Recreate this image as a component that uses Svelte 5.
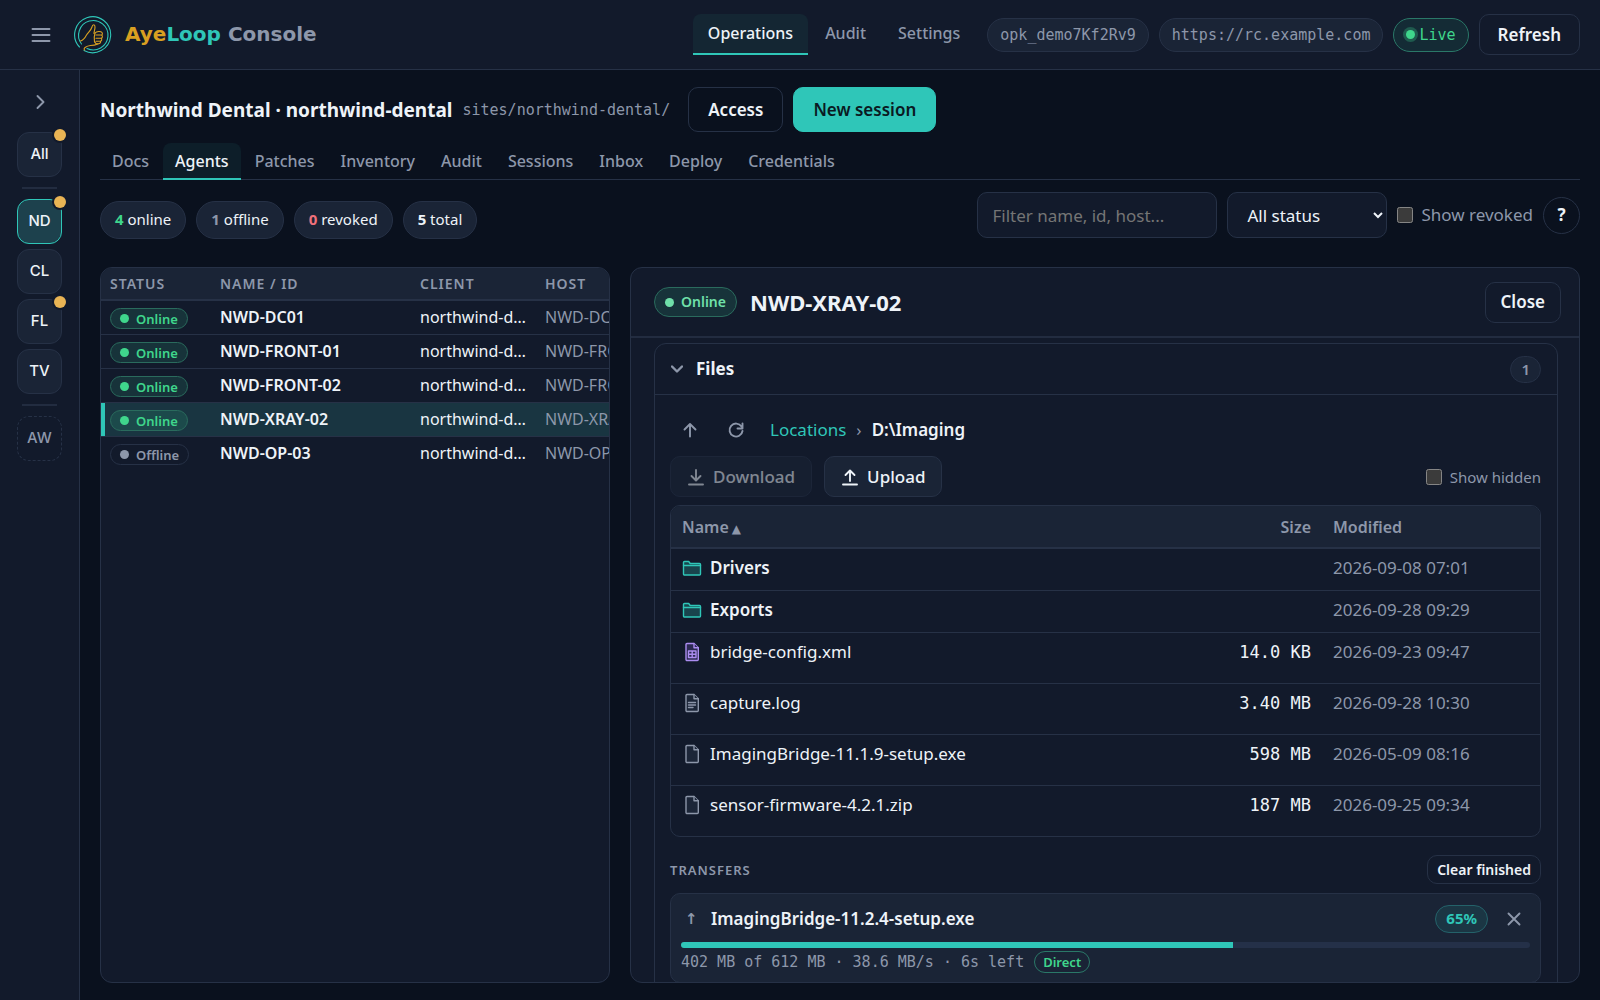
<script>
  const sites = [
    { code: 'ND', alert: true, active: true },
    { code: 'CL' },
    { code: 'FL', alert: true },
    { code: 'TV' }
  ]

  const navItems = ['Operations', 'Audit', 'Settings']
  const tabs = ['Docs', 'Agents', 'Patches', 'Inventory', 'Audit', 'Sessions', 'Inbox', 'Deploy', 'Credentials']

  const counts = [
    { n: 4, label: 'online' },
    { n: 1, label: 'offline' },
    { n: 0, label: 'revoked' },
    { n: 5, label: 'total' }
  ]

  const agents = [
    { name: 'NWD-DC01', online: true },
    { name: 'NWD-FRONT-01', online: true },
    { name: 'NWD-FRONT-02', online: true },
    { name: 'NWD-XRAY-02', online: true },
    { name: 'NWD-OP-03', online: false }
  ]

  const files = [
    { name: 'Drivers', kind: 'folder', size: '', modified: '2026-09-08 07:01' },
    { name: 'Exports', kind: 'folder', size: '', modified: '2026-09-28 09:29' },
    { name: 'bridge-config.xml', kind: 'sheet', size: '14.0 KB', modified: '2026-09-23 09:47' },
    { name: 'capture.log', kind: 'text', size: '3.40 MB', modified: '2026-09-28 10:30' },
    { name: 'ImagingBridge-11.1.9-setup.exe', kind: 'file', size: '598 MB', modified: '2026-05-09 08:16' },
    { name: 'sensor-firmware-4.2.1.zip', kind: 'file', size: '187 MB', modified: '2026-09-25 09:34' }
  ]

  const transfer = { name: 'ImagingBridge-11.2.4-setup.exe', percent: 65 }

  let page = $state('Operations')
  let tab = $state('Agents')
  let selected = $state('NWD-XRAY-02')
  let filter = $state('')
  let status = $state('all')
  let showRevoked = $state(false)
  let showHidden = $state(false)
</script>

{#snippet fileIcon(kind)}
  <svg class='file-icon {kind}' viewBox='0 0 20 20' width='20' height='20' aria-hidden='true'>
    {#if kind === 'folder'}
      <path d='M1.5 16V4.5a1 1 0 0 1 1-1h4.2l1.5 2h9.3a1 1 0 0 1 1 1V16a1 1 0 0 1-1 1h-15a1 1 0 0 1-1-1z' />
      <path d='M1.5 7.5h17' />
    {:else}
      <path d='M5 1.5h7l4.3 4.3v11.7a1 1 0 0 1-1 1H5a1 1 0 0 1-1-1v-15a1 1 0 0 1 1-1z' />
      <path d='M12 1.5v4.3h4.3' />
      {#if kind === 'sheet'}
        <path d='M6.5 9H14v6.5H6.5zM6.5 12.2H14M10.2 9v6.5' />
      {:else if kind === 'text'}
        <path d='M6.5 9.5h7M6.5 12h7M6.5 14.5H11' />
      {/if}
    {/if}
  </svg>
{/snippet}

<div class='app'>
  <header class='topbar'>
    <button class='icon-btn' aria-label='Menu'>
      <svg viewBox='0 0 20 20' width='20' height='20'><path d='M1.5 4h17M1.5 10h17M1.5 16h17' /></svg>
    </button>
    <svg class='logo' viewBox='0 0 38 38' width='38' height='38' aria-hidden='true'>
      <g class='ring'>
        <path d='M5.5 31A18 18 0 1 1 10 34.500' />
        <path d='M7.5 28A14.7 14.7 0 1 1 13 32.500' />
      </g>
      <g class='hand'>
        <path d='M6.5 25c3-1 4.5-3 6-6 1.500-2.500 4.500-4.500 5.500-8 .5-3 3-3 3 0 0 2.500-1 4.500-1 6.500' />
        <path d='M21 17c1.500-2 6-2 7-.5s0 2.500-.5 2.500c1.500 1 1 3-.3 3.200 1 1 .5 2.800-.7 3 .5 1.300-.5 2.500-2 2.500H22l-1.500-2' />
        <path d='M22 19h5M22 22.200h5M22 25.200h4.500M21 17c-1 3-1 6-.5 9' />
        <path d='M10.500 34c-1.500-2 2-4 6-4.500 3 0 5-.5 7.500-1.500' />
      </g>
    </svg>
    <h1 class='brand'><span class='aye'>Aye</span><span class='loop'>Loop</span> Console</h1>

    <nav class='main-nav'>
      {#each navItems as item}
        <a href='#{item.toLowerCase()}' class:active={page === item} onclick={() => (page = item)}>{item}</a>
      {/each}
    </nav>
    <div class='session'>
      <span class='chip mono'>opk_demo7Kf2Rv9</span>
      <span class='chip mono'>https://rc.example.com</span>
      <span class='chip mono live'><i></i>Live</span>
      <button class='btn refresh'>Refresh</button>
    </div>
  </header>

  <div class='shell'>
    <aside class='rail'>
      <button class='icon-btn expand' aria-label='Expand'>
        <svg viewBox='0 0 20 20' width='20' height='20'><path d='M7.5 4l6 6-6 6' /></svg>
      </button>
      <button class='site'>All<i class='dot'></i></button>
      <hr />
      {#each sites as site}
        <button class='site' class:active={site.active}>
          {site.code}
          {#if site.alert}<i class='dot'></i>{/if}
        </button>
      {/each}
      <hr />
      <button class='site archived'>AW</button>
    </aside>

    <main>
      <div class='site-head'>
        <h2>Northwind Dental · northwind-dental</h2>
        <span class='path mono'>sites/northwind-dental/</span>
        <button class='btn large'>Access</button>
        <button class='btn large primary'>New session</button>
      </div>

      <nav class='tabs'>
        {#each tabs as item}
          <a href='#{item.toLowerCase()}' class:active={tab === item} onclick={() => (tab = item)}>{item}</a>
        {/each}
      </nav>

      <div class='toolbar'>
        <div class='counts'>
          {#each counts as count}
            <span class='count {count.label}'><b>{count.n}</b> {count.label}</span>
          {/each}
        </div>
        <div class='filters'>
          <input type='text' placeholder='Filter name, id, host...' aria-label='Filter agents' bind:value={filter} />
          <select aria-label='Status' bind:value={status}>
            <option value='all'>All status</option>
            <option value='online'>Online</option>
            <option value='offline'>Offline</option>
          </select>
          <label class='check'><input type='checkbox' bind:checked={showRevoked} />Show revoked</label>
          <button class='help' aria-label='Help'>?</button>
        </div>
      </div>

      <div class='panes'>
        <section class='pane'>
          <table class='agents'>
            <thead>
              <tr><th class='w-status'>Status</th><th class='w-name'>Name / ID</th><th class='w-client'>Client</th><th>Host</th></tr>
            </thead>
            <tbody>
              {#each agents as agent}
                <tr class:selected={selected === agent.name} onclick={() => (selected = agent.name)}>
                  <td><span class='badge' class:off={!agent.online}><i></i>{agent.online ? 'Online' : 'Offline'}</span></td>
                  <td class='name'>{agent.name}</td>
                  <td>northwind-dental</td>
                  <td class='host'>{agent.name}</td>
                </tr>
              {/each}
            </tbody>
          </table>
        </section>

        <section class='pane detail'>
          <div class='detail-head'>
            <span class='badge big'><i></i>Online</span>
            <h3>{selected}</h3>
            <button class='btn'>Close</button>
          </div>

          <div class='detail-body'>
            <div class='card'>
              <div class='card-head'>
                <svg viewBox='0 0 12 12' width='12' height='12' aria-hidden='true'><path d='M1 3.5l5 5 5-5' /></svg>
                <h4>Files</h4>
                <span class='file-count'>1</span>
              </div>

              <div class='card-body'>
                <div class='crumbs'>
                  <button class='icon-btn' aria-label='Up'>
                    <svg viewBox='0 0 20 20' width='20' height='20'><path d='M10 16.5V4M4.5 9.500L10 4l5.500 5.500' /></svg>
                  </button>
                  <button class='icon-btn' aria-label='Reload'>
                    <svg viewBox='0 0 20 20' width='20' height='20'><path d='M15.5 6.500A6.500 6.500 0 1 0 16.500 11M16.500 3.500v5h-5' /></svg>
                  </button>
                  <a href='#locations'>Locations</a>
                  <span class='sep'>›</span>
                  <b>D:\Imaging</b>
                </div>

                <div class='actions'>
                  <button class='action' disabled>
                    <svg viewBox='0 0 18 18' width='18' height='18'><path d='M9 2v10M4.5 8L9 12.500 13.500 8M2 16.500h14' /></svg>Download
                  </button>
                  <button class='action'>
                    <svg viewBox='0 0 18 18' width='18' height='18'><path d='M9 13V2.500M4.500 7L9 2.500 13.500 7M2 16.500h14' /></svg>Upload
                  </button>
                  <label class='check'><input type='checkbox' bind:checked={showHidden} />Show hidden</label>
                </div>

                <div class='files-wrap'>
                  <table class='files'>
                    <thead>
                      <tr><th>Name<span class='sort'>▲</span></th><th class='size'>Size</th><th class='modified'>Modified</th></tr>
                    </thead>
                    <tbody>
                      {#each files as file}
                        <tr class={file.kind}>
                          <td><div class='entry'>{@render fileIcon(file.kind)}{file.name}</div></td>
                          <td class='size mono'>{file.size}</td>
                          <td class='modified'>{file.modified}</td>
                        </tr>
                      {/each}
                    </tbody>
                  </table>
                </div>

                <div class='transfers-head'>
                  <h5>Transfers</h5>
                  <button class='btn small'>Clear finished</button>
                </div>

                <div class='transfer'>
                  <div class='transfer-top'>
                    <span class='dir'>↑</span>
                    <b>{transfer.name}</b>
                    <span class='percent'>{transfer.percent}%</span>
                    <button class='icon-btn cancel' aria-label='Cancel'>
                      <svg viewBox='0 0 20 20' width='20' height='20'><path d='M4.5 4.5l11 11M15.5 4.5l-11 11' /></svg>
                    </button>
                  </div>
                  <div class='bar'><div style='width:{transfer.percent}%'></div></div>
                  <div class='transfer-meta'>
                    <span class='mono'>402 MB of 612 MB · 38.6 MB/s · 6s left</span>
                    <span class='direct'>Direct</span>
                  </div>
                </div>
              </div>
            </div>
          </div>
        </section>
      </div>
    </main>
  </div>
</div>

<style>
  :global(body) {
    background: #0a111e;
    color-scheme: dark;
  }

  .app {
    --panel: #121a2b;
    --surface: #1a2436;
    --line: #263146;
    --text: #eef3f8;
    --muted: #8d97aa;
    --teal: #2fc6b8;
    --green: #3fd68c;
    --gold: #e9b454;
    display: flex;
    flex-direction: column;
    height: 100vh;
    color: var(--text);
    font: 16px/24px 'Noto Sans', sans-serif;
  }

  .app * {
    box-sizing: border-box;
  }

  h1, h2, h3, h4, h5 {
    margin: 0;
  }

  button, input, select {
    font: inherit;
    color: inherit;
  }

  button {
    cursor: pointer;
  }

  a {
    text-decoration: none;
  }

  svg {
    display: block;
    flex: none;
    fill: none;
    stroke: currentColor;
    stroke-width: 1.9;
    stroke-linecap: round;
    stroke-linejoin: round;
  }

  .mono {
    font-family: 'DejaVu Sans Mono', monospace;
    font-size: 15px;
  }

  .icon-btn {
    display: grid;
    place-items: center;
    width: 40px;
    height: 40px;
    padding: 0;
    border: 0;
    background: none;
    color: var(--muted);
  }

  .btn {
    height: 41px;
    padding: 0 15px;
    border: 1px solid var(--line);
    border-radius: 10px;
    background: none;
    font-size: 17px;
    font-weight: 600;
    white-space: nowrap;
  }

  .btn.large {
    height: 45px;
    padding: 0 19px;
  }

  .btn.primary {
    background: var(--teal);
    border-color: var(--teal);
    color: #0a1a22;
  }

  .btn.small {
    height: 29px;
    padding: 0 9px;
    font-size: 14px;
    line-height: 20px;
  }

  /* top bar */
  .topbar {
    display: flex;
    align-items: center;
    flex: none;
    height: 70px;
    padding: 0 20px 0 21px;
    border-bottom: 1px solid var(--line);
    background: var(--panel);
  }

  .logo {
    margin: 0 13px;
    stroke-width: 1.1;
  }

  .ring {
    stroke: var(--teal);
  }

  .hand {
    stroke: #d9a021;
  }

  .brand {
    padding-bottom: 2px;
    color: var(--muted);
    font: 700 20px/28px 'DejaVu Sans', sans-serif;
    white-space: nowrap;
  }

  .aye {
    color: #d9a021;
  }

  .loop {
    color: var(--teal);
  }

  .main-nav {
    display: flex;
    gap: 2px;
    margin-left: auto;
  }

  .main-nav a {
    height: 41px;
    padding: 7px 15px 0;
    border-bottom: 2px solid transparent;
    border-radius: 8px 8px 0 0;
    color: var(--muted);
    font-weight: 500;
  }

  .main-nav a.active {
    border-color: var(--teal);
    background: #142633;
    color: var(--text);
  }

  .session {
    display: flex;
    align-items: center;
    gap: 10px;
    margin-left: 12px;
  }

  .chip {
    display: flex;
    align-items: center;
    height: 34px;
    padding: 0 12px;
    border: 1px solid var(--line);
    border-radius: 17px;
    background: var(--surface);
    color: var(--muted);
  }

  .chip.live {
    gap: 4px;
    border-color: #2a7868;
    background: #142b35;
    color: var(--green);
  }

  .live i {
    width: 9px;
    height: 9px;
    border-radius: 50%;
    background: var(--green);
    box-shadow: 0 0 0 3px #1f5b4e;
  }

  .refresh {
    padding: 0 18px;
  }

  .shell {
    display: flex;
    flex: 1;
    min-height: 0;
  }

  /* site rail */
  .rail {
    display: flex;
    flex-direction: column;
    align-items: center;
    flex: none;
    gap: 5px;
    width: 80px;
    padding-top: 12px;
    border-right: 1px solid var(--line);
    background: var(--panel);
  }

  .expand {
    margin-bottom: 5px;
  }

  .rail hr {
    width: 35px;
    height: 2px;
    margin: 5px 0;
    border: 0;
    background: #222c40;
  }

  .site {
    position: relative;
    width: 45px;
    height: 45px;
    padding: 0 0 2px;
    border: 1px solid var(--line);
    border-radius: 12px;
    background: var(--surface);
    font: 500 15px/20px Inter, sans-serif;
  }

  .site.active {
    border-color: var(--teal);
    background: #1d414d;
  }

  .site.archived {
    border-style: dashed;
    background: none;
    color: var(--muted);
  }

  .dot {
    position: absolute;
    top: -4px;
    right: -5px;
    width: 12px;
    height: 12px;
    border-radius: 50%;
    background: var(--gold);
    box-shadow: 0 0 0 2px var(--panel);
  }

  main {
    display: flex;
    flex-direction: column;
    flex: 1;
    min-width: 0;
    padding: 17px 20px;
  }

  .site-head {
    display: flex;
    align-items: center;
    gap: 10px;
  }

  h2 {
    font-size: 19px;
    line-height: 28px;
  }

  .path {
    margin-right: 8px;
    color: var(--muted);
  }

  .tabs {
    display: flex;
    gap: 2px;
    margin-top: 11px;
    border-bottom: 1px solid var(--line);
  }

  .tabs a {
    height: 37px;
    padding: 6px 12px 0;
    margin-bottom: -1px;
    border-bottom: 2px solid transparent;
    border-radius: 8px 8px 0 0;
    color: var(--muted);
    font-weight: 500;
  }

  .tabs a.active {
    border-color: var(--teal);
    background: #0d1e29;
    color: var(--text);
  }

  .toolbar {
    display: flex;
    justify-content: space-between;
    margin: 11px 0 28px;
  }

  .counts, .filters {
    display: flex;
    gap: 10px;
  }

  .counts {
    padding-top: 10px;
  }

  .count {
    height: 38px;
    padding: 5px 14px;
    border: 1px solid var(--line);
    border-radius: 19px;
    background: var(--surface);
    font-size: 15px;
  }

  .online b {
    color: var(--green);
  }

  .offline b {
    color: var(--muted);
  }

  .revoked b {
    color: #f0717b;
  }

  .filters {
    align-items: center;
    font-size: 17px;
  }

  .filters input[type='text'], select {
    height: 46px;
    border: 1px solid var(--line);
    border-radius: 10px;
    background: var(--panel);
  }

  .filters input[type='text'] {
    width: 240px;
    padding: 0 14px;
  }

  .filters input::placeholder {
    color: #757575;
  }

  select {
    width: 160px;
    padding: 0 0 0 15px;
  }

  .check {
    display: flex;
    align-items: center;
    gap: 8px;
    color: var(--muted);
  }

  .check input {
    width: 16px;
    height: 16px;
    margin: 0;
  }

  .help {
    width: 37px;
    height: 37px;
    padding: 0;
    border: 1px solid var(--line);
    border-radius: 50%;
    background: none;
    font-weight: 700;
  }

  .panes {
    display: grid;
    grid-template-columns: 51fr 95fr;
    gap: 20px;
    flex: 1;
    min-height: 0;
  }

  .pane {
    min-width: 0;
    overflow: hidden;
    border: 1px solid var(--line);
    border-radius: 12px;
    background: var(--panel);
  }

  table {
    border-collapse: collapse;
    table-layout: fixed;
    text-align: left;
  }

  /* agent list */
  .agents {
    width: 700px;
  }

  .w-status { width: 110px; }
  .w-name { width: 200px; }
  .w-client { width: 125px; }

  .agents th {
    height: 32px;
    padding: 0 9px;
    border-bottom: 2px solid var(--line);
    background: var(--surface);
    color: var(--muted);
    font-size: 14px;
    font-weight: 600;
    letter-spacing: 1px;
    text-transform: uppercase;
  }

  .agents td {
    height: 34px;
    padding: 0 8px 0 9px;
    border-bottom: 1px solid var(--line);
    overflow: hidden;
    text-overflow: ellipsis;
    white-space: nowrap;
  }

  .agents tr:last-child td {
    border-bottom: 0;
  }

  .agents .name {
    font-weight: 600;
  }

  .agents .host {
    color: var(--muted);
  }

  .selected td {
    background: #193541;
  }

  .selected td:first-child {
    box-shadow: inset 4px 0 var(--teal);
  }

  .badge {
    display: inline-flex;
    align-items: center;
    gap: 7px;
    height: 21px;
    padding: 0 9px;
    border: 1px solid #2a6b5d;
    border-radius: 15px;
    background: #17333a;
    color: var(--green);
    font-size: 13px;
    font-weight: 600;
    vertical-align: middle;
  }

  .badge i {
    width: 9px;
    height: 9px;
    border-radius: 50%;
    background: currentColor;
  }

  .badge.off {
    border-color: var(--line);
    background: none;
    color: var(--muted);
  }

  .selected .badge {
    background: #1c4a4b;
  }

  .badge.big {
    height: 30px;
    padding: 0 10px;
    color: #6fe0a9;
    font-size: 14px;
  }

  /* agent detail */
  .detail {
    display: flex;
    flex-direction: column;
  }

  .detail-head {
    display: flex;
    align-items: center;
    gap: 13px;
    flex: none;
    height: 70px;
    padding: 0 18px 0 23px;
    border-bottom: 2px solid #222c40;
  }

  .detail-head .btn {
    margin-left: auto;
  }

  h3 {
    font-size: 22px;
    line-height: 28px;
  }

  .detail-body {
    flex: 1;
    min-height: 0;
    padding: 5px 21px 0 23px;
    overflow: hidden;
  }

  .card {
    border: 1px solid var(--line);
    border-radius: 12px 12px 0 0;
  }

  .card-head {
    display: flex;
    align-items: center;
    gap: 13px;
    height: 51px;
    padding: 0 16px;
    border-bottom: 1px solid var(--line);
  }

  .card-head svg {
    color: var(--muted);
    stroke-width: 2.4;
  }

  h4 {
    font-size: 17px;
    line-height: 24px;
  }

  .file-count {
    height: 27px;
    margin-left: auto;
    padding: 0 10px;
    border: 1px solid var(--line);
    border-radius: 14px;
    background: var(--surface);
    color: var(--muted);
    font-size: 15px;
    font-weight: 600;
  }

  .card-body {
    padding: 14px 16px 14px 15px;
  }

  .crumbs {
    display: flex;
    align-items: center;
    gap: 6px;
    height: 41px;
    font-size: 17px;
  }

  .crumbs a {
    margin-left: 8px;
    color: var(--teal);
  }

  .sep {
    padding: 0 4px;
    color: var(--muted);
  }

  .crumbs b, .entry, .transfer b {
    font-weight: 600;
    white-space: nowrap;
  }

  .actions {
    display: flex;
    align-items: center;
    gap: 12px;
    margin: 6px 0 8px;
    font-size: 17px;
  }

  .action {
    display: flex;
    align-items: center;
    gap: 8px;
    height: 41px;
    padding: 0 16px;
    border: 1px solid var(--line);
    border-radius: 10px;
    background: var(--surface);
    font-weight: 500;
  }

  .action:disabled {
    opacity: 0.5;
  }

  .actions .check {
    margin-left: auto;
    font-size: 15px;
  }

  .files-wrap {
    overflow: hidden;
    border: 1px solid var(--line);
    border-radius: 10px;
  }

  .files {
    width: 100%;
  }

  .files th {
    height: 42px;
    padding: 0 11px;
    border-bottom: 2px solid var(--line);
    background: var(--surface);
    color: var(--muted);
    font-weight: 600;
  }

  .files td {
    height: 51px;
    padding: 7px 11px;
    border-bottom: 1px solid var(--line);
    font-size: 17px;
    vertical-align: top;
  }

  .entry {
    display: flex;
    align-items: center;
    gap: 8px;
    font-weight: 400;
  }

  .files .folder td {
    height: 42px;
  }

  .folder .entry {
    font-weight: 600;
  }

  .files tr:last-child td {
    border-bottom: 0;
  }

  .files .size {
    width: 130px;
    text-align: right;
  }

  .files .modified {
    width: 218px;
    color: var(--muted);
  }

  .sort {
    margin-left: 3px;
    font: 12px/12px 'DejaVu Sans', sans-serif;
  }

  .file-icon {
    color: var(--muted);
    stroke-width: 1.4;
  }

  .file-icon.folder {
    color: var(--teal);
    fill: #19444d;
  }

  .file-icon.sheet {
    color: #ab8df0;
    fill: #2c2a52;
  }

  .file-icon.text, .file-icon.file {
    fill: #1c2638;
  }

  .transfers-head {
    display: flex;
    align-items: center;
    justify-content: space-between;
    margin: 18px 0 9px;
  }

  h5 {
    color: var(--muted);
    font-size: 13px;
    font-weight: 600;
    line-height: 20px;
    letter-spacing: 1px;
    text-transform: uppercase;
  }

  .transfer {
    padding: 5px 10px 8px;
    border: 1px solid var(--line);
    border-radius: 10px;
    background: var(--surface);
  }

  .transfer-top {
    display: flex;
    align-items: center;
    height: 40px;
    font-size: 17px;
  }

  .dir {
    width: 30px;
    padding-left: 4px;
    color: var(--muted);
    font: 700 15px/24px 'DejaVu Sans', sans-serif;
  }

  .percent {
    height: 28px;
    margin-left: auto;
    padding: 0 10px;
    border: 1px solid #24626a;
    border-radius: 14px;
    background: #1b3644;
    color: var(--teal);
    font-size: 15px;
    font-weight: 700;
  }

  .cancel {
    margin: 0 -4px 0 6px;
  }

  .bar {
    height: 6px;
    margin-top: 3px;
    overflow: hidden;
    border-radius: 3px;
    background: #243048;
  }

  .bar div {
    height: 100%;
    background: var(--teal);
  }

  .transfer-meta {
    display: flex;
    align-items: center;
    gap: 10px;
    margin-top: 2px;
    color: var(--muted);
  }

  .direct {
    height: 22px;
    padding: 0 8px;
    border: 1px solid #2a7868;
    border-radius: 11px;
    color: var(--green);
    font-size: 13px;
    font-weight: 600;
    line-height: 20px;
  }
</style>
